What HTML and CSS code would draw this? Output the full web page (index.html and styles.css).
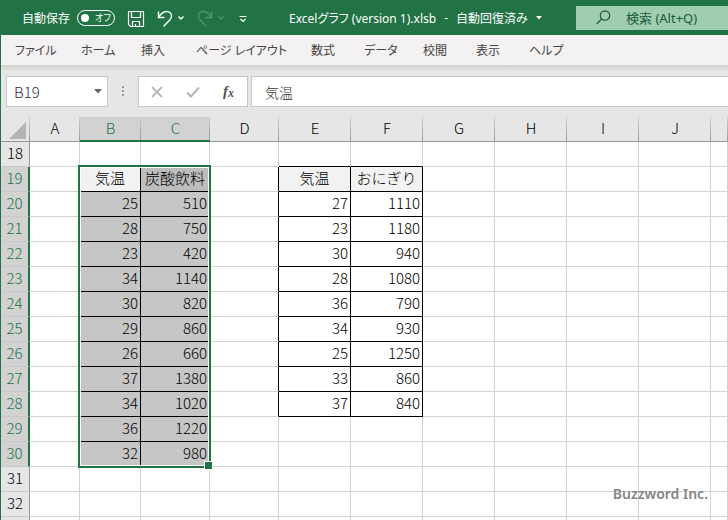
FILE: index.html
```html
<!DOCTYPE html>
<html lang="ja">
<head>
  <meta charset="UTF-8">
  <meta name="viewport" content="width=device-width, initial-scale=1.0">
  <title>Excelグラフ (version 1).xlsb</title>
  <link rel="stylesheet" href="styles.css">
</head>
<body>

<div class="window">
  <header class="titlebar">
    <label class="autosave">自動保存
      <input type="checkbox" class="switch-input">
      <span class="switch"><span class="knob"></span>オフ</span>
    </label>
    <div class="quick">
      <button class="icon-btn" aria-label="上書き保存">
        <svg width="18" height="18" viewBox="0 0 18 18" fill="none" stroke="currentColor" stroke-width="1.2"><path d="M1.5 1.5h15v15h-13l-2-2zM4.5 1.5v6h9v-6M5.5 16.5v-5h7v5M8.5 16.5v-2.5"/></svg>
      </button>
      <button class="icon-btn undo" aria-label="元に戻す">
        <svg width="28" height="18" viewBox="0 0 28 18" fill="none" stroke="currentColor" stroke-width="1.4"><path d="M1.5 1.5v6h6M1.5 7.5C4 3.5 6.5 1.5 9.5 1.5c3 0 5 2 5 4.5 0 2-.7 3-2 4.3L6.5 16.5"/><path d="M21.5 6.5l2.500 2.500 2.500-2.500"/></svg>
      </button>
      <button class="icon-btn redo" aria-label="やり直し" disabled>
        <svg width="28" height="18" viewBox="0 0 28 18" fill="none" stroke="currentColor" stroke-width="1.4"><path d="M14.5 1.5v6h-6M14.5 7.5C12 3.5 9.5 1.5 6.5 1.5c-3 0-5 2-5 4.5 0 2 .7 3 2 4.3L9.5 16.5"/><path d="M21.5 6.5l2.500 2.500 2.500-2.500"/></svg>
      </button>
      <button class="icon-btn more" aria-label="クイック アクセス ツール バーのカスタマイズ">
        <svg width="8" height="18" viewBox="0 0 8 18" fill="none" stroke="currentColor" stroke-width="1.2"><path d="M.5 6.5h7M1.500 9l2.500 2.500L6.500 9"/></svg>
      </button>
    </div>
    <button class="filename">
      <span>Excelグラフ (version 1).xlsb</span><span>-</span><span>自動回復済み</span>
      <svg width="6" height="4" viewBox="0 0 6 4"><path d="M0 0h6L3 3.500z" fill="currentColor"/></svg>
    </button>
    <div class="search">
      <svg width="15" height="15" viewBox="0 0 15 15" fill="none" stroke="currentColor" stroke-width="1.2"><circle cx="9" cy="5.5" r="4.7"/><path d="M5.7 9L.7 14"/></svg>
      <input type="text" placeholder="検索 (Alt+Q)" aria-label="検索">
    </div>
  </header>

  <nav class="tabs">
    <button>ファイル</button>
    <button>ホーム</button>
    <button>挿入</button>
    <button>ページ レイアウト</button>
    <button>数式</button>
    <button>データ</button>
    <button>校閲</button>
    <button>表示</button>
    <button>ヘルプ</button>
  </nav>

  <div class="formula-bar">
    <div class="name-box">
      <input type="text" value="B19" aria-label="名前ボックス">
      <button aria-label="名前の一覧"><svg width="8" height="5" viewBox="0 0 8 5"><path d="M0 0h8L4 4.5z" fill="#666"/></svg></button>
    </div>
    <svg class="grip" width="2" height="11" viewBox="0 0 2 11" fill="#9a9a9a"><path d="M0 0h2v2H0zM0 4h2v2H0zM0 8h2v2H0z"/></svg>
    <div class="fx-buttons">
      <button aria-label="キャンセル"><svg width="12" height="12" viewBox="0 0 12 12" fill="none" stroke="#b8b8b8" stroke-width="1.8"><path d="M1 1l10 10M11 1L1 11"/></svg></button>
      <button aria-label="入力"><svg width="14" height="12" viewBox="0 0 14 12" fill="none" stroke="#b8b8b8" stroke-width="2.2"><path d="M1 6.5l4 4L13 1.5"/></svg></button>
      <button class="fx" aria-label="関数の挿入">f<sub>x</sub></button>
    </div>
    <input type="text" class="formula" value="気温" aria-label="数式バー">
  </div>

  <main class="sheet">
    <table>
      <colgroup>
        <col class="w-row"><col class="w-a"><col class="w-b"><col class="w-c"><col class="w-c">
        <col class="w-std"><col class="w-std"><col class="w-std"><col class="w-std"><col class="w-std"><col class="w-std"><col>
      </colgroup>
      <thead>
        <tr><th class="corner"><svg width="17" height="17" viewBox="0 0 17 17"><path d="M17 0v17H0z" fill="#b4b4b4"/></svg></th><th>A</th><th class="on">B</th><th class="on">C</th><th>D</th><th>E</th><th>F</th><th>G</th><th>H</th><th>I</th><th>J</th><th></th></tr>
      </thead>
      <tbody>
        <tr class="above"><th>18</th><td></td><td></td><td></td><td></td><td></td><td></td><td></td><td></td><td></td><td></td><td></td></tr>
        <tr class="names"><th class="on">19</th><td></td><td class="sel active">気温</td><td class="sel">炭酸飲料</td><td class="edge"></td><td class="box">気温</td><td class="box">おにぎり</td><td></td><td></td><td></td><td></td><td></td></tr>
        <tr><th class="on">20</th><td></td><td class="sel">25</td><td class="sel">510</td><td class="edge"></td><td class="box">27</td><td class="box">1110</td><td></td><td></td><td></td><td></td><td></td></tr>
        <tr><th class="on">21</th><td></td><td class="sel">28</td><td class="sel">750</td><td class="edge"></td><td class="box">23</td><td class="box">1180</td><td></td><td></td><td></td><td></td><td></td></tr>
        <tr><th class="on">22</th><td></td><td class="sel">23</td><td class="sel">420</td><td class="edge"></td><td class="box">30</td><td class="box">940</td><td></td><td></td><td></td><td></td><td></td></tr>
        <tr><th class="on">23</th><td></td><td class="sel">34</td><td class="sel">1140</td><td class="edge"></td><td class="box">28</td><td class="box">1080</td><td></td><td></td><td></td><td></td><td></td></tr>
        <tr><th class="on">24</th><td></td><td class="sel">30</td><td class="sel">820</td><td class="edge"></td><td class="box">36</td><td class="box">790</td><td></td><td></td><td></td><td></td><td></td></tr>
        <tr><th class="on">25</th><td></td><td class="sel">29</td><td class="sel">860</td><td class="edge"></td><td class="box">34</td><td class="box">930</td><td></td><td></td><td></td><td></td><td></td></tr>
        <tr><th class="on">26</th><td></td><td class="sel">26</td><td class="sel">660</td><td class="edge"></td><td class="box">25</td><td class="box">1250</td><td></td><td></td><td></td><td></td><td></td></tr>
        <tr><th class="on">27</th><td></td><td class="sel">37</td><td class="sel">1380</td><td class="edge"></td><td class="box">33</td><td class="box">860</td><td></td><td></td><td></td><td></td><td></td></tr>
        <tr><th class="on">28</th><td></td><td class="sel">34</td><td class="sel">1020</td><td class="edge"></td><td class="box">37</td><td class="box">840</td><td></td><td></td><td></td><td></td><td></td></tr>
        <tr><th class="on">29</th><td></td><td class="sel">36</td><td class="sel">1220</td><td></td><td></td><td></td><td></td><td></td><td></td><td></td><td></td></tr>
        <tr><th class="on">30</th><td></td><td class="sel">32</td><td class="sel">980</td><td></td><td></td><td></td><td></td><td></td><td></td><td></td><td></td></tr>
        <tr><th>31</th><td></td><td></td><td></td><td></td><td></td><td></td><td></td><td></td><td></td><td></td><td></td></tr>
        <tr><th>32</th><td></td><td></td><td></td><td></td><td></td><td></td><td></td><td></td><td></td><td></td><td></td></tr>
        <tr><th></th><td></td><td></td><td></td><td></td><td></td><td></td><td></td><td></td><td></td><td></td><td></td></tr>
      </tbody>
    </table>
    <div class="selection"></div>
    <div class="credit">Buzzword Inc.</div>
  </main>
</div>

</body>
</html>
```
FILE: styles.css
```css
* {
  box-sizing: border-box;
}
body {
  margin: 0;
  font-family: "Noto Sans", "Noto Sans CJK JP", sans-serif;
  font-size: 12px;
}
button,
input {
  font: inherit;
  color: inherit;
  background: none;
  border: none;
  padding: 0;
  margin: 0;
}
svg {
  display: block;
  flex: none;
}
.window {
  height: 100vh;
  display: flex;
  flex-direction: column;
  overflow: hidden;
  border-left: 1px solid #217346;
}

/* title bar */
.titlebar {
  flex: none;
  height: 35px;
  display: flex;
  align-items: center;
  padding-left: 21px;
  background: #217346;
  color: #fff;
  white-space: nowrap;
}
.autosave {
  display: flex;
  align-items: center;
  gap: 7px;
  position: relative;
}
.switch-input {
  position: absolute;
  opacity: 0;
}
.switch {
  display: flex;
  align-items: center;
  gap: 6px;
  width: 38px;
  height: 16px;
  padding-left: 3px;
  border: 1px solid #fff;
  border-radius: 8px;
  font-size: 9px;
  font-feature-settings: "palt";
}
.knob {
  width: 8px;
  height: 8px;
  border-radius: 50%;
  background: #fff;
}
.quick {
  display: flex;
  align-items: center;
  padding-top: 3px;
  margin-left: 12px;
}
.undo {
  margin-left: 12px;
}
.redo {
  margin-left: 12px;
  color: #4f9470;
}
.more {
  margin-left: 14px;
}
.filename {
  display: flex;
  align-items: center;
  gap: 8px;
  margin-left: 42px;
  font-feature-settings: "palt";
}
.search {
  width: 152px;
  height: 24px;
  margin-left: auto;
  padding-left: 20px;
  display: flex;
  align-items: center;
  gap: 15px;
  background: #a0cdb2;
  color: #185c37;
}
.search input {
  flex: 1;
  min-width: 0;
  font-size: 13px;
}
.search input::placeholder {
  color: #185c37;
  opacity: 1;
}

/* ribbon tabs */
.tabs {
  flex: none;
  height: 30px;
  display: grid;
  grid-template-columns: 66px 60px 55px 115px 53px 59px 53px 53px auto;
  padding-left: 14px;
  background: #f3f1f1;
  color: #444;
}
.tabs button {
  text-align: left;
  white-space: nowrap;
  font-feature-settings: "palt";
}

/* formula bar */
.formula-bar {
  flex: none;
  height: 52px;
  display: flex;
  align-items: flex-start;
  padding: 11px 0 0 5px;
  background: linear-gradient(#d0d0ce, #e6e6e6 6px);
  color: #333;
  font-family: "Noto Sans CJK JP", sans-serif;
  font-weight: 300;
}
.name-box,
.fx-buttons,
.formula {
  height: 31px;
  background: #fff;
  border: 1px solid #c6c6c6;
}
.name-box {
  width: 102px;
  display: flex;
  padding: 0 5px 0 7px;
}
.name-box input {
  flex: 1;
  min-width: 0;
  font-size: 15px;
}
.grip {
  margin: 10px 14px 0;
}
.fx-buttons {
  width: 110px;
  display: flex;
  gap: 23px;
  align-items: center;
  padding: 0 12px;
}
.fx {
  font: italic bold 15px "Liberation Serif", serif;
  color: #555;
}
.fx sub {
  font-size: 12px;
  vertical-align: -1px;
}
.formula {
  flex: 1;
  min-width: 0;
  margin-left: 3px;
  padding: 0 13px;
  border-right: none;
  font-size: 14px;
}

/* sheet */
.sheet {
  flex: 1;
  min-height: 0;
  position: relative;
  overflow: hidden;
}
table {
  width: 100%;
  table-layout: fixed;
  border-collapse: separate;
  border-spacing: 0;
  font-family: "Noto Sans CJK JP", sans-serif;
  font-size: 15px;
  font-weight: 300;
  line-height: 20px;
}
.w-row { width: 29px; }
.w-a { width: 50px; }
.w-b { width: 61px; }
.w-c { width: 69px; }
.w-std { width: 72px; }

th,
td {
  height: 25px;
  padding: 0 0 2px;
  border-right: 1px solid #d4d4d4;
  border-bottom: 1px solid #d4d4d4;
  white-space: nowrap;
}
th {
  font-weight: 300;
  background: #e6e6e6;
  border-color: #999;
}
thead th {
  border-right: none;
  background: linear-gradient(#d0d0d0, #999) right / 1px 100% no-repeat #e6e6e6;
}
thead .on {
  background-color: #d2d2d2;
  border-bottom: 2px solid #217346;
  color: #217346;
}
.corner svg {
  margin: 4px 0 0 8px;
}
tbody th {
  border-bottom-color: #c8c8c8;
}
tbody .on {
  background: #d2d2d2;
  border-right: 2px solid #217346;
  color: #217346;
}
td {
  text-align: right;
}
.sel,
.box {
  padding-right: 2px;
  border-color: #000;
}
.sel {
  background: #c6c6c6;
}
.edge {
  border-right-color: #000;
}
.above td:nth-child(6),
.above td:nth-child(7) {
  border-bottom-color: #000;
}
.names td {
  padding-right: 0;
  text-align: center;
}
.names .box,
.names .active {
  background: #f2f2f2;
}
.names .sel:not(.active) {
  background: #bdbdbd;
}

/* frame round B19:C30 */
.selection {
  position: absolute;
  left: 77px;
  top: 48px;
  width: 133px;
  height: 303px;
  border: 2px solid #217346;
  box-shadow: inset 0 0 0 1px #fff;
}
.selection::after {
  content: "";
  position: absolute;
  right: -4px;
  bottom: -4px;
  width: 7px;
  height: 7px;
  background: #217346;
  border: 1px solid #fff;
}
.credit {
  position: absolute;
  right: 20px;
  bottom: 16px;
  font-size: 14px;
  font-weight: 600;
  line-height: 20px;
  color: #858585;
}
```
